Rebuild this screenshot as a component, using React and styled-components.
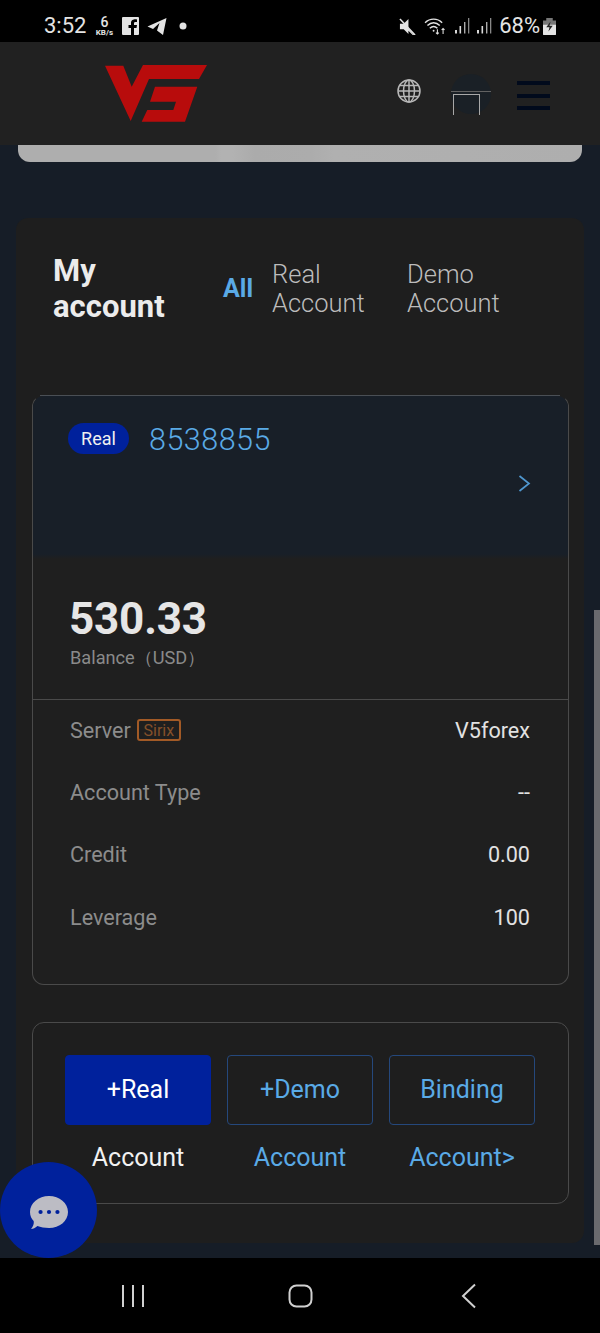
import React from 'react';
import styled, { createGlobalStyle } from 'styled-components';

const GlobalStyle = createGlobalStyle`
  html, body {
    margin: 0;
    padding: 0;
    background: #161d27;
    font-family: Roboto, "Liberation Sans", sans-serif;
  }
  * { box-sizing: border-box; }
`;

const Phone = styled.div`
  position: relative;
  width: 600px;
  height: 1333px;
  overflow: hidden;
  display: flex;
  flex-direction: column;
  background: #161d27;
`;

const StatusBar = styled.div`
  height: 42px;
  flex: none;
  background: #000;
  color: #e4e4e4;
  display: flex;
  align-items: center;
  justify-content: space-between;
  padding: 10px 44px 0 44px;
`;

const StatusGroup = styled.div`
  display: flex;
  align-items: center;
  gap: ${p => p.$gap || 6}px;
  svg { display: block; flex: none; }
`;

const Clock = styled.span`
  font-size: 22px;
  line-height: 24px;
`;

const Speed = styled.span`
  width: 20px;
  display: flex;
  flex-direction: column;
  align-items: center;
  font-size: 8px;
  font-weight: 700;
  line-height: 8px;
  white-space: nowrap;
  b { font-size: 14px; line-height: 13px; font-weight: 500; }
`;

const Percent = styled.span`
  font-size: 22px;
  line-height: 24px;
`;

const Header = styled.header`
  height: 103px;
  flex: none;
  background: #212121;
  display: flex;
  align-items: center;
  padding: 0 50px 0 105px;
`;

const HeaderIcons = styled.div`
  margin-left: auto;
  display: flex;
  align-items: center;
`;

const GlobeIcon = styled.svg`
  display: block;
  margin: -5px 30px 0 0;
`;

const Avatar = styled.div`
  position: relative;
  width: 40px;
  height: 40px;
  border-radius: 50%;
  background: #1a2026;
  margin-right: 26px;
`;

const AvatarFrame = styled.span`
  position: absolute;
  left: 0;
  top: 17px;
  width: 40px;
  height: 23px;
  border-top: 1px solid #626262;
  &::after {
    content: '';
    position: absolute;
    left: 2px;
    top: 2px;
    width: 25px;
    height: 20px;
    border: 1px solid #a8a8a8;
    border-bottom: 0;
  }
`;

const Burger = styled.div`
  width: 33px;
  display: flex;
  flex-direction: column;
  gap: 8.5px;
  margin-top: 4px;
  span { height: 4px; background: #010a1c; }
`;

const Main = styled.main`
  flex: 1;
  min-height: 0;
  padding: 0 16px;
  display: flex;
  flex-direction: column;
`;

const BannerEdge = styled.div`
  height: 17px;
  margin: 0 2px 56px;
  flex: none;
  background: linear-gradient(90deg, #aeaeae 35%, #b2b2b2 36%, #b2b2b2 38%, #ababab 42%, #acacac 52%, #b0b0b0 56%, #aeaeae 100%);
  border-radius: 0 0 12px 12px;
`;

const AccountPanel = styled.section`
  height: 1025px;
  flex: none;
  background: #1e1e1e;
  border-radius: 12px;
  padding: 0 15px 0 16px;
`;

const TitleRow = styled.div`
  height: 177px;
  display: flex;
  align-items: center;
  padding: 0 0 36px 21px;
`;

const Title = styled.h2`
  width: 170px;
  margin: 0;
  padding-right: 30px;
  font-size: 31px;
  line-height: 36px;
  font-weight: 700;
  color: #ececec;
`;

const Tab = styled.span`
  width: ${p => p.$width}px;
  font-size: ${p => (p.$active ? 25 : 25.5)}px;
  line-height: 29px;
  font-weight: ${p => (p.$active ? 700 : 300)};
  color: ${p => (p.$active ? '#5aaae6' : '#bcbcbc')};
`;

const AccountCard = styled.div`
  position: relative;
  height: 590px;
  border: 1px solid #4a4a4a;
  border-top-color: transparent;
  border-radius: 12px;
  background: #1f1f1f;
  &::before {
    content: '';
    position: absolute;
    top: -1px;
    left: 7px;
    right: 8px;
    border-top: 1px solid #4a4f55;
  }
`;

const CardTop = styled.div`
  height: 163px;
  border-radius: 11px 11px 0 0;
  background: linear-gradient(180deg, #181f28 97%, #1f1f1f 100%);
  padding: 26px 37px 0 35px;
`;

const IdRow = styled.div`
  display: flex;
  align-items: center;
  gap: 20px;
`;

const TypeBadge = styled.span`
  width: 61px;
  height: 31px;
  border-radius: 16px;
  background: #00219c;
  color: #f0f0f0;
  font-size: 18px;
  display: flex;
  align-items: center;
  justify-content: center;
`;

const AccountNo = styled.span`
  margin-top: 2px;
  font-size: 30.5px;
  line-height: 31px;
  font-weight: 300;
  color: #5aaae6;
  letter-spacing: 0.5px;
`;

const ArrowRow = styled.div`
  display: flex;
  justify-content: flex-end;
  margin-top: 20px;
  svg { display: block; }
`;

const BalanceBlock = styled.div`
  height: 141px;
  padding: 35px 0 0 37px;
  border-bottom: 1px solid #4a4a4a;
`;

const Balance = styled.div`
  margin-left: -1px;
  font-size: 44px;
  line-height: 50px;
  font-weight: 700;
  color: #e6e6e6;
  letter-spacing: -0.2px;
`;

const BalanceLabel = styled.div`
  font-size: 18.2px;
  line-height: 24px;
  color: #8a8a8a;
  margin-top: 2px;
`;

const InfoList = styled.div`
  margin-top: -1px;
  padding: 0 38px 0 37px;
`;

const InfoRow = styled.div`
  height: 62.3px;
  display: flex;
  align-items: center;
  justify-content: space-between;
  font-size: 21.6px;
`;

const InfoLabel = styled.span`
  display: flex;
  align-items: center;
  gap: 6px;
  color: #8c8c8c;
`;

const InfoValue = styled.span`
  color: #e2e2e2;
`;

const ServerTag = styled.span`
  width: 44px;
  height: 22px;
  border: 2px solid #a25a26;
  border-radius: 3px;
  font-size: 16px;
  color: #84502a;
  display: flex;
  align-items: center;
  justify-content: center;
`;

const ActionsBox = styled.div`
  height: 182px;
  margin-top: 37px;
  border: 1px solid #4a4a4a;
  border-radius: 12px;
  padding: 32px 0 0 32px;
  display: grid;
  grid-template-columns: repeat(3, 146px);
  column-gap: 16px;
`;

const Action = styled.div`
  display: flex;
  flex-direction: column;
  align-items: center;
  gap: 18px;
`;

const ActionButton = styled.div`
  width: 146px;
  height: 70px;
  padding-bottom: 2px;
  border-radius: 4px;
  border: 1px solid ${p => (p.$primary ? '#00219c' : '#25487c')};
  background: ${p => (p.$primary ? '#00219c' : 'transparent')};
  color: ${p => (p.$primary ? '#fff' : '#5aaae6')};
  font-size: 25px;
  display: flex;
  align-items: center;
  justify-content: center;
`;

const ActionLabel = styled.span`
  font-size: 25px;
  line-height: 30px;
  color: ${p => (p.$primary ? '#f2f2f2' : '#5aaae6')};
`;

const NavBar = styled.nav`
  height: 75px;
  flex: none;
  background: #000;
  display: grid;
  grid-template-columns: 168px 173px 20px;
  padding-left: 120px;
  align-items: center;
  svg { display: block; }
`;

const ChatButton = styled.div`
  position: absolute;
  left: 0;
  top: 1162px;
  width: 97px;
  height: 96px;
  padding-top: 6px;
  border-radius: 50%;
  background: #00219c;
  display: flex;
  align-items: center;
  justify-content: center;
`;

const ScrollThumb = styled.div`
  position: absolute;
  right: 0;
  top: 610px;
  width: 6px;
  height: 635px;
  background: #6a6a6e;
`;

const tabs = [
  { label: 'All', width: 49, active: true },
  { label: 'Real Account', width: 135 },
  { label: 'Demo Account', width: 110 },
];

const infoRows = [
  { label: 'Server', value: 'V5forex', tag: 'Sirix' },
  { label: 'Account Type', value: '--' },
  { label: 'Credit', value: '0.00' },
  { label: 'Leverage', value: '100' },
];

const actions = [
  { top: '+Real', bottom: 'Account', primary: true },
  { top: '+Demo', bottom: 'Account' },
  { top: 'Binding', bottom: 'Account>' },
];

function Logo() {
  return (
    <svg width="103" height="58" viewBox="0 0 103 58">
      <path fill="#b80c0c" d="M0 .7H18.300L26.700 21.700 38 0H102L94 14H44L25.700 56Z" />
      <path fill="#b80c0c" d="M50 21.700H92.300L80 56.700H36.700L42.300 45H68.300L71 36.700H45Z" />
    </svg>
  );
}

function Signal() {
  return (
    <svg width="15" height="16" viewBox="0 0 15 16" fill="#d8d8d8">
      <rect x="0" y="12" width="2" height="3.500" />
      <rect x="4.500" y="8" width="1.600" height="7.500" />
      <rect x="9" y="4" width="1.400" height="11.500" fill="#aaa" />
      <rect x="13" y="0" width="1.300" height="15.500" fill="#888" />
    </svg>
  );
}

function StatusLeft() {
  return (
    <StatusGroup $gap={8}>
      <Clock>3:52</Clock>
      <Speed><b>6</b>KB/s</Speed>
      <svg width="17" height="18" viewBox="0 0 17 18">
        <path fill="#e4e4e4" d="M1 0H16A1 1 0 0 1 17 1V17A1 1 0 0 1 16 18H12V11H14.500L15 8H12V6.500C12 5.500 12.400 5 13.500 5H15V2.400C13 2 9 2 9 6V8H6.500V11H9V18H1A1 1 0 0 1 0 17V1A1 1 0 0 1 1 0Z" />
      </svg>
      <svg width="20" height="18" viewBox="0 0 19 18">
        <path fill="#e4e4e4" d="M0 9.500L19 1 15.500 18 9.500 13.500 12 6 5.500 12Z" />
      </svg>
      <svg width="8" height="8" viewBox="0 0 8 8" style={{ marginLeft: 4 }}>
        <circle cx="4" cy="4" r="3.500" fill="#e4e4e4" />
      </svg>
    </StatusGroup>
  );
}

function StatusRight() {
  return (
    <StatusGroup $gap={7}>
      <svg width="17" height="17" viewBox="0 0 18 18">
        <path fill="#e4e4e4" d="M1 6H5L10 1V11L15 17 17 18H14.500L10 13.500V17L5 12H1Z" />
        <path stroke="#e4e4e4" strokeWidth="1.600" d="M1 1L17 18" />
      </svg>
      <svg width="25" height="18" viewBox="0 0 24 19" fill="none" stroke="#e4e4e4" strokeWidth="1.500">
        <path d="M1 6C6 1 14 1 19 6" />
        <path d="M3.500 9C7.500 5 12.500 5 16.500 9" />
        <path d="M6 12C8.500 9.500 11.500 9.500 14 12" />
        <path d="M14 13V18M12.500 16.500L14 18 15.500 16.500M20 18V12M18.500 13.500L20 12 21.500 13.500" strokeWidth="1.100" />
        <circle cx="10" cy="14.500" r="1" fill="#e4e4e4" stroke="none" />
      </svg>
      <Signal />
      <Signal />
      <Percent>68%</Percent>
      <svg width="13" height="17" viewBox="0 0 12 20" style={{ marginLeft: -4 }} preserveAspectRatio="none">
        <path fill="#777" d="M3 0H9V3H12V9H0V3H3Z" />
        <path fill="#e4e4e4" d="M0 8H12V19A1 1 0 0 1 11 20H1A1 1 0 0 1 0 19Z" />
        <path fill="#222" d="M7 4L3 11H6L5 16 9 9H6Z" />
      </svg>
    </StatusGroup>
  );
}

function Globe() {
  return (
    <GlobeIcon width="24" height="24" viewBox="0 0 24 24" fill="none" stroke="#b8b8b8" strokeWidth="1.500">
      <circle cx="12" cy="12" r="11" />
      <ellipse cx="12" cy="12" rx="5.500" ry="11" />
      <path d="M12 1V23M1 12H23M3 6.500H21M3 17.500H21" />
    </GlobeIcon>
  );
}

function App() {
  return (
    <Phone>
      <GlobalStyle />
      <StatusBar>
        <StatusLeft />
        <StatusRight />
      </StatusBar>

      <Header>
        <Logo />
        <HeaderIcons>
          <Globe />
          <Avatar><AvatarFrame /></Avatar>
          <Burger><span /><span /><span /></Burger>
        </HeaderIcons>
      </Header>

      <Main>
        <BannerEdge />
        <AccountPanel>
          <TitleRow>
            <Title>My account</Title>
            {tabs.map(t => (
              <Tab key={t.label} $width={t.width} $active={t.active}>{t.label}</Tab>
            ))}
          </TitleRow>

          <AccountCard>
            <CardTop>
              <IdRow>
                <TypeBadge>Real</TypeBadge>
                <AccountNo>8538855</AccountNo>
              </IdRow>
              <ArrowRow>
                <svg width="13" height="17" viewBox="0 0 13 17" fill="none" stroke="#4f97cf" strokeWidth="1.700">
                  <path d="M1.500 1L11 8.500 1.500 16" />
                </svg>
              </ArrowRow>
            </CardTop>
            <BalanceBlock>
              <Balance>530.33</Balance>
              <BalanceLabel>Balance（USD）</BalanceLabel>
            </BalanceBlock>
            <InfoList>
              {infoRows.map(r => (
                <InfoRow key={r.label}>
                  <InfoLabel>
                    {r.label}
                    {r.tag && <ServerTag>{r.tag}</ServerTag>}
                  </InfoLabel>
                  <InfoValue>{r.value}</InfoValue>
                </InfoRow>
              ))}
            </InfoList>
          </AccountCard>

          <ActionsBox>
            {actions.map(a => (
              <Action key={a.top}>
                <ActionButton $primary={a.primary}>{a.top}</ActionButton>
                <ActionLabel $primary={a.primary}>{a.bottom}</ActionLabel>
              </Action>
            ))}
          </ActionsBox>
        </AccountPanel>
      </Main>

      <NavBar>
        <svg width="26" height="24" viewBox="0 0 26 24" stroke="#d0d0d0" strokeWidth="2">
          <path d="M3 1V23M13 1V23M23 1V23" />
        </svg>
        <svg width="25" height="24" viewBox="0 0 25 24" fill="none" stroke="#d0d0d0" strokeWidth="2">
          <rect x="1.500" y="1.500" width="22" height="21" rx="7" />
        </svg>
        <svg width="16" height="26" viewBox="0 0 16 26" fill="none" stroke="#d0d0d0" strokeWidth="2">
          <path d="M14 1.500L2 13 14 24.500" />
        </svg>
      </NavBar>

      <ChatButton>
        <svg width="38" height="34" viewBox="0 0 36 34" preserveAspectRatio="none">
          <path fill="#bcbcc4" d="M18 0C28 0 36 7 36 16S28 32 18 32C14 32 10 31 7 30 5 32 3 33 1 33 3 30 4 28 3.500 25 1.500 23 0 20 0 16 0 7 8 0 18 0Z" />
          <circle cx="10" cy="16" r="2" fill="#00219c" />
          <circle cx="18" cy="16" r="2" fill="#00219c" />
          <circle cx="26" cy="16" r="2" fill="#00219c" />
        </svg>
      </ChatButton>
      <ScrollThumb />
    </Phone>
  );
}

export default App;
